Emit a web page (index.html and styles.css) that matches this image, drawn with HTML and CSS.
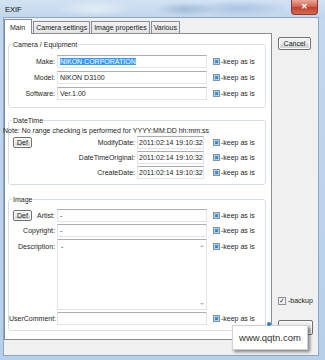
FILE: index.html
```html
<!DOCTYPE html>
<html lang="en">
<head>
    <meta charset="UTF-8">
    <title>EXIF</title>
    <link rel="stylesheet" href="styles.css">
</head>
<body>
    <div class="window">
        <!-- barra de título -->
        <div class="titlebar">
            <span class="title">EXIF</span>
            <div class="close-btn">&#x2715;</div>
        </div>

        <div class="client">
            <div class="main-col">
                <div class="tabs">
                    <div class="tab active">Main</div>
                    <div class="tab">Camera settings</div>
                    <div class="tab">Image properties</div>
                    <div class="tab">Various</div>
                </div>

                <div class="panel">
                    <fieldset class="group g-camera">
                        <legend>Camera / Equipment</legend>
                        <div class="rows">
                            <span class="lbl wide">Make:</span>
                            <div class="field"><span class="sel">NIKON CORPORATION</span></div>
                            <span class="keep"><i class="ind"></i>-keep as is</span>

                            <span class="lbl wide">Model:</span>
                            <div class="field">NIKON D3100</div>
                            <span class="keep"><i class="ind"></i>-keep as is</span>

                            <span class="lbl wide">Software:</span>
                            <div class="field">Ver.1.00</div>
                            <span class="keep"><i class="ind"></i>-keep as is</span>
                        </div>
                    </fieldset>

                    <fieldset class="group g-date">
                        <legend>DateTime</legend>
                        <div class="note">Note: No range checking is performed for YYYY:MM:DD hh:mm:ss</div>
                        <div class="rows dt">
                            <span class="cell"><button class="btn def">Def</button></span>
                            <span class="lbl">ModifyDate:</span>
                            <div class="field">2011:02:14 19:10:32</div>
                            <span class="keep"><i class="ind"></i>-keep as is</span>

                            <span class="lbl wide">DateTimeOriginal:</span>
                            <div class="field">2011:02:14 19:10:32</div>
                            <span class="keep"><i class="ind"></i>-keep as is</span>

                            <span class="lbl wide">CreateDate:</span>
                            <div class="field">2011:02:14 19:10:32</div>
                            <span class="keep"><i class="ind"></i>-keep as is</span>
                        </div>
                    </fieldset>

                    <fieldset class="group g-image">
                        <legend>Image</legend>
                        <div class="rows img">
                            <span class="cell"><button class="btn def">Def</button></span>
                            <span class="lbl">Artist:</span>
                            <div class="field">-</div>
                            <span class="keep"><i class="ind"></i>-keep as is</span>

                            <span class="lbl wide">Copyright:</span>
                            <div class="field">-</div>
                            <span class="keep"><i class="ind"></i>-keep as is</span>

                            <span class="lbl wide top">Description:</span>
                            <div class="field memo">
                                <span>-</span>
                                <div class="scroll"><i class="up"></i><i class="down"></i></div>
                            </div>
                            <span class="keep top"><i class="ind"></i>-keep as is</span>

                            <span class="lbl wide">UserComment:</span>
                            <div class="field"></div>
                            <span class="keep"><i class="ind"></i>-keep as is</span>
                        </div>
                    </fieldset>
                </div>
            </div>

            <div class="side-col">
                <button class="btn cancel">Cancel</button>
                <label class="backup"><span class="check">&#x2713;</span>-backup</label>
                <button class="btn ok">OK</button>
            </div>
        </div>

        <!-- marca d'água por cima do diálogo -->
        <div class="watermark"><i class="dot"></i>www.qqtn.com</div>
    </div>
</body>
</html>
```

FILE: styles.css
```css
body {
    margin: 0;
    padding: 0;
    font-family: 'Liberation Sans', Arial, sans-serif;
    font-size: 7px;
    line-height: 9px;
    color: #1e1e1e;
}

.window {
    position: relative;
    width: 325px;
    height: 360px;
    display: flex;
    flex-direction: column;
    background: linear-gradient(#c4d8ee, #b7cfe9);
    overflow: hidden;
}

/* título */
.titlebar {
    height: 18px;
    display: flex;
    justify-content: space-between;
    align-items: flex-start;
    padding-left: 5px;
    padding-right: 7px;
    background:
        radial-gradient(ellipse 40px 8px at 95px 9px, rgba(255, 255, 255, 0.5), transparent),
        radial-gradient(ellipse 30px 7px at 185px 9px, rgba(90, 130, 180, 0.35), transparent),
        radial-gradient(ellipse 50px 8px at 240px 8px, rgba(120, 160, 205, 0.4), transparent),
        linear-gradient(#d3e2f2, #c0d5ec);
}

.title {
    margin-top: 5px;
    font-size: 7.5px;
    color: #111;
}

.close-btn {
    width: 27px;
    height: 15px;
    box-sizing: border-box;
    border: 1px solid #8a3a30;
    border-top: none;
    border-radius: 0 0 4px 4px;
    background: linear-gradient(#e8a89b, #d0604b 50%, #c0402b 51%, #d56a52);
    color: #fff;
    font-size: 8px;
    font-weight: bold;
    line-height: 14px;
    text-align: center;
}

.client {
    flex: 1;
    display: flex;
    margin: 0 7px 5px 4px;
    background-color: #f0f0f0;
    box-shadow: 0 0 0 1px #8aa6c8;
}

.main-col {
    width: 270px;
    display: flex;
    flex-direction: column;
}

/* abas */
.tabs {
    height: 15px;
    display: flex;
    align-items: flex-end;
    position: relative;
    z-index: 1;
}

.tab {
    height: 12px;
    box-sizing: border-box;
    padding: 1px 2px 0;
    margin-right: 1px;
    border: 1px solid #898c95;
    border-bottom: none;
    background: linear-gradient(#f2f2f2, #e4e4e4);
    color: #1e1e1e;
    white-space: nowrap;
}

.tab.active {
    height: 15px;
    padding: 3px 6px 0 5px;
    margin-bottom: -1px;
    background: #fff;
}

.panel {
    height: 307px;
    box-sizing: border-box;
    border: 1px solid #898c95;
    background-color: #fff;
    padding: 6px 5px 0 3px;
}

/* grupos */
.group {
    margin: 0;
    padding: 6px 0 7px;
    border: 1px solid #d5dfe5;
    border-radius: 3px;
    min-width: 0;
}

.group legend {
    margin-left: 3px;
    padding: 0 1px;
    line-height: 9px;
}

.g-date {
    margin-top: 8px;
    padding-top: 0;
    padding-bottom: 5px;
}

.g-image {
    margin-top: 10px;
    padding-top: 5px;
    padding-bottom: 5px;
}

.rows {
    display: grid;
    grid-template-columns: 24px 24px 156px auto;
    grid-auto-rows: 13px;
    row-gap: 3px;
    align-items: center;
}

.rows.dt {
    grid-template-columns: 24px 104px 76px auto;
    row-gap: 2px;
}

.rows.img {
    grid-template-rows: 13px 13px 71px 13px;
    row-gap: 2px;
}

.note {
    margin: 1px 0 1px -6px;
    white-space: nowrap;
}

.lbl {
    text-align: right;
    padding-right: 2px;
    white-space: nowrap;
}

.lbl.wide {
    grid-column: 1 / 3;
}

.lbl.top,
.keep.top {
    align-self: start;
    margin-top: 3px;
}

.field {
    width: 150px;
    height: 13px;
    box-sizing: border-box;
    border: 1px solid #e2e3ea;
    border-top-color: #abadb3;
    background: #fff;
    padding: 1px 2px;
    white-space: nowrap;
    overflow: hidden;
}

.dt .field {
    width: 67px;
    padding: 1px 1px;
}

.sel {
    background-color: #3399ff;
    color: #fff;
}

.field.memo {
    height: 71px;
    display: flex;
    justify-content: space-between;
    padding: 2px 0 0 3px;
}

.scroll {
    width: 8px;
    display: flex;
    flex-direction: column;
    justify-content: space-between;
    align-items: center;
    padding: 3px 0 4px;
}

.scroll i {
    width: 0;
    height: 0;
    border-left: 2px solid transparent;
    border-right: 2px solid transparent;
}

.scroll .up {
    border-bottom: 2px solid #b8b8b8;
}

.scroll .down {
    border-top: 2px solid #b8b8b8;
}

/* caixas "keep as is" em estado indeterminado */
.keep {
    display: flex;
    align-items: center;
    white-space: nowrap;
}

.ind {
    width: 7px;
    height: 7px;
    box-sizing: border-box;
    margin-right: 1px;
    border: 1px solid #8e8f8f;
    background: linear-gradient(135deg, #5ab0ec, #1c6fc0);
    box-shadow: inset 0 0 0 1px #a9d4f5;
}

/* botões */
.btn {
    font-family: inherit;
    font-size: 7px;
    line-height: 9px;
    color: #1e1e1e;
    padding: 0;
    border: 1px solid #707070;
    border-radius: 2px;
    background: linear-gradient(#f2f2f2, #ebebeb 50%, #dddddd 51%, #cfcfcf);
    box-shadow: inset 0 0 0 1px #fcfcfc;
}

.btn.def {
    width: 19px;
    height: 11px;
    margin-left: 4px;
}

.side-col {
    flex: 1;
    display: flex;
    flex-direction: column;
    padding: 19px 5px 20px 6px;
}

.btn.cancel {
    width: 33px;
    height: 13px;
}

.backup {
    margin-top: auto;
    margin-bottom: 15px;
    display: flex;
    align-items: center;
    white-space: nowrap;
}

.check {
    width: 8px;
    height: 8px;
    box-sizing: border-box;
    margin-right: 2px;
    border: 1px solid #8e8f8f;
    background: #f4f4f4;
    color: #22407a;
    font-size: 7px;
    line-height: 6px;
    text-align: center;
}

.btn.ok {
    width: 35px;
    height: 15px;
}

.watermark {
    position: absolute;
    left: 232px;
    top: 325px;
    width: 76px;
    height: 25px;
    box-sizing: border-box;
    border: 1px solid #d0d0d0;
    background: #fff;
    box-shadow: 2px 2px 3px rgba(0, 0, 0, 0.45);
    font-size: 9.5px;
    line-height: 23px;
    text-align: center;
    color: #333;
}

.dot {
    position: absolute;
    left: 34px;
    top: -4px;
    width: 4px;
    height: 4px;
    border-radius: 50%;
    background: #2b7fd0;
}
```
